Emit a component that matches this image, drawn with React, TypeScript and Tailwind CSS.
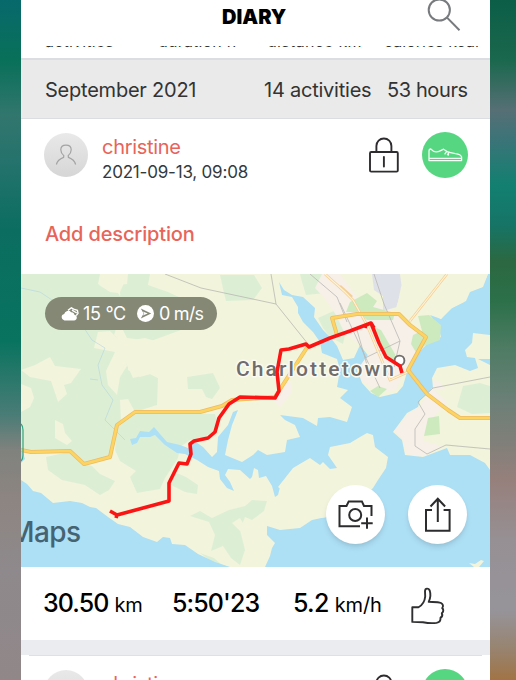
import React from "react"

type IconProps = { className?: string }

const summary = [
  { label: "activities", style: "w-[113px] tracking-[0.2px]" },
  { label: "duration h", style: "w-[109px] tracking-[0.2px]" },
  { label: "distance km", style: "w-[117px] tracking-[0.3px]" },
  { label: "calories kcal", style: "" },
]

const SearchIcon = ({ className }: IconProps) => (
  <svg className={className} viewBox="0 0 34 34" fill="none" stroke="#777b7e" strokeWidth="2">
    <circle cx="12.3" cy="12" r="10.6" />
    <path d="M19.8 19.4 32.5 32.3" />
  </svg>
)

const LockIcon = ({ className }: IconProps) => (
  <svg className={className} viewBox="0 0 30 36" fill="none" stroke="#2f2c30" strokeWidth="1.9">
    <rect x="1" y="15" width="27.8" height="19.6" rx="1.2" />
    <path d="M7.4 15V9a7.5 7.5 0 0 1 15 0v6" />
    <path d="M14.9 20v9.6" strokeLinecap="round" />
  </svg>
)

const UserAvatar = () => (
  <div className="-ml-px flex h-11 w-11 shrink-0 items-center justify-center rounded-full bg-linear-to-b from-[#e9e9e9] to-[#d6d6d6]">
    <svg className="h-[22px] w-[22px]" viewBox="0 0 22 22" fill="none" stroke="#a3a3a3" strokeWidth="1.2">
      <path d="M1.4 20.5c.8-3.5 3.3-5.6 7.2-7.1l.2-1.8C6.600 9.800 5.800 7.800 5.800 5.800 5.800 3 8 1.200 11 1.200s5.200 1.800 5.200 4.600c0 2-.8 4-3 5.800l.2 1.800c3.900 1.500 6.400 3.600 7.200 7.100" />
    </svg>
  </div>
)

const ShoeBadge = () => (
  <div className="flex h-[46px] w-[46px] shrink-0 items-center justify-center rounded-full bg-[#56d680]">
    <svg className="h-[14px] w-[35px]" viewBox="0 0 35 14" fill="none" stroke="#f0fff4" strokeWidth="1.3" strokeLinejoin="round">
      <path d="M1 12.600V3.200C1 1.800 1.800 1 2.800 1l2.400 2c2 1.200 5 .8 7-.2l3.400-1.600 4.600 3 7.200 1.400c3.400.4 5.600 1.400 6.200 3.400v3.600z" />
      <path d="M1 10.400h32.600" />
      <path d="M16.600 6.400l2.300-3.300M19.200 7.100l2.300-3.200M21 3.600l-.8 4" />
    </svg>
  </div>
)

const CloudIcon = () => (
  <svg className="h-[14px] w-[18px]" viewBox="0 0 18 14">
    <path d="M3.400 13.400a3.200 3.200 0 0 1-.2-6.300 4 4 0 0 1 7-1.900c1.800-.2 3 1 3.100 2.600 1.600.2 2.500 1.400 2.500 2.700 0 1.600-1 2.900-2.800 2.900z" fill="#fff" />
    <path d="M7 3.400l3.400-2.600 2.200 1.400 3.800 1.200.6 3-1.800 2.200M11 3.200l4.800 2.800" fill="none" stroke="#fff" strokeWidth="1.400" />
  </svg>
)

const WindIcon = () => (
  <svg className="h-[17px] w-[17px]" viewBox="0 0 17 17">
    <circle cx="8.500" cy="8.500" r="8.500" fill="#fff" />
    <path d="M3.800 3.600l10.400 4.900-10.400 4.900 2.800-4.900z" fill="#858875" />
    <path d="M5.800 6.500l5 2-5 2 1.400-2z" fill="#fff" />
  </svg>
)

const CameraIcon = ({ className }: IconProps) => (
  <svg className={className} viewBox="0 0 36 29" fill="none" stroke="#2c2c2e" strokeWidth="2">
    <path d="M22 26.200H1.500V6h7l2.200-4.600h13.200L26 6h7.500v10" />
    <circle cx="17.200" cy="15" r="6" />
    <path d="M29 17.500v11.300M23.200 23.200h11.500" />
  </svg>
)

const ShareIcon = ({ className }: IconProps) => (
  <svg className={className} viewBox="0 0 26 35" fill="none" stroke="#2c2c2e" strokeWidth="2">
    <path d="M7 13H1v20.800h23.600V13h-6" />
    <path d="M12.800 25V2M5.500 9.500l7.300-7.700 7.300 7.700" />
  </svg>
)

const ThumbIcon = ({ className }: IconProps) => (
  <svg className={className} viewBox="0 0 34 38" fill="none" stroke="#2f2f31" strokeWidth="1.900" strokeLinejoin="round">
    <path d="M1.300 20.300h6.200c4-2.300 6.300-6.300 6.700-10.800l-.2-5.500c.2-3.200 3.600-3 4.700-.5 1.300 3.800.8 7.500-1 11.300 4.500.3 9-.2 12.300 1.200 2 1.200 2.700 3.200 1.200 5 1.500 1.600 1.500 3.600-.4 5.200 1 1.800.4 3.500-1.300 4.700.2 2.500-1.200 4.600-4 5-4.500.5-9 .2-13.500-.7l-10.700-.3z" />
  </svg>
)

const RouteMap = () => (
  <svg className="h-[293px] w-full" viewBox="21 274 469 293">
    <rect x="21" y="274" width="469" height="293" fill="#f3f4dc" />

    {/* woods */}
    <g fill="#dcefd5">
      <path d="M21 274H103L99 285 110 292 118 293 122 300 150 307 125 320 117 326 114 335 122 345 125 361 133 378 150 374 158 378 157 405 135 412 118 424 110 456 85 463 70 451 21 450z" />
      <path d="M128 274H150L148 285 168 292 181 298 181 330 151 341 127 338 121 326 120 292z" />
      <path d="M46 457 73 451 83 464 92 466 100 474 115 481 109 490 100 495 85 485 62 480 48 470z" />
      <path d="M117 428 133 414 165 413 215 414 218 428 205 437 190 440 180 447 178 458 165 478 160 489 137 493 130 477 136 471 120 461 115 450z" />
      <path d="M220 275H254L262 288 253 300 226 301 224 293z" />
      <path d="M187 377 213 373 220 388 212 399 206 397 202 389 188 389z" />
      <path d="M172 471 186 477 198 485 197 494 185 492 171 485z" />
      <path d="M190 516 200 511 212 518 229 510 245 506 252 500 267 501 264 511 252 520 245 517 240 530 245 550 240 565 231 558 223 546 211 551 215 535 209 522z" />
      <path d="M300 274H325L326 293 306 295 302 282z" />
      <path d="M318 318 336 310 346 330 343 344 330 337 323 328z" />
      <path d="M200 553 214 558 224 567H219z" />
    </g>
    <g fill="#f3f4dc">
      <path d="M100 274H128L127 284 105 286 98 284z" />
      <path d="M21 370 35 365 50 357 55 366 81 369 71 383 64 385 67 394 58 402 51 381 30 377z" />
      <path d="M21 384 31 388 34 398 30 407 21 412z" />
      <path d="M98 332 110 331 122 343 127 366 120 377 117 395 108 385 106 371 115 352 94 348z" />
      <path d="M120 400 128 399 135 412 121 420z" />
      <path d="M55 420 63 424 65 433 72 441 67 445 55 438z" />
      <path d="M232 523 240 518 244 525 240 531z" />
      <path d="M128 341 145 338 165 344 181 338V377L158 378 150 374 140 377 128 370z" />
    </g>

    {/* sea */}
    <g fill="#addff5">
      <path d="M21 480 27 484 33 491 41 493 53 503 70 501 82 503 90 507 96 508 108 517 118 524 130 527 143 537 157 542 163 537 170 538 172 544 185 545 198 554 215 562 230 567H21z" />
      <path d="M21 447 25 459 21 463z" />
      <path d="M490 274H488L483 287 470 292 466 301 452 308 441 319 430 315 438 325 441 337 428 343 419 352 407 372 403 386 397 393 380 397 371 393 362 383 358 372 366 368 370 358 360 345 354 358 343 360 337 346 330 337 323 330 314 317 315 308 303 297 292 295 284 290 279 282 282 295 292 297 298 307 298 313 303 322 313 332 320 342 322 353 337 359 340 370 337 387 348 390 340 398 352 407 347 422 330 417 318 418 317 426 303 418 280 415 285 420 295 425 300 437 287 440 285 452 267 455 258 450 253 455 242 462 225 455 228 440 232 425 238 410 233 412 228 425 218 437 217 452 212 457 203 447 193 440 188 448 180 445 167 442 160 434 154 427 149 432 140 431 136 438 130 439 132 445 137 443 140 437 150 437 155 435 165 445 177 453 185 454 197 460 208 467 219 471 220 479 227 488 234 491 230 482 225 475 228 469 240 470 250 479 252 477 254 468 258 470 259 478 266 476 272 486 275 497 278 495 280 487 340 480 340 510 326 517 312 520 300 528 280 530 267 526 267 535 275 543 272 548 270 556 265 567H490z" />
    </g>
    <path d="M469 563 475 564 481 560 484 561 479 567H474z" fill="#f3f4dc" />

    {/* far shores */}
    <g fill="#f3f4dc">
      <path d="M278 487 293 468 310 458 320 465 323 462 330 469 337 468 328 455 330 447 350 443 360 437 367 433 373 435 375 447 388 457 386 468 378 480 373 488 345 515 320 518 300 505z" />
      <path d="M490 335 473 333 472 343 465 350 467 357 475 358 478 368 470 371 455 365 437 368 432 378 433 388 420 400 418 407 407 413 393 432 402 440 405 455 423 457 447 448 450 455 470 455 485 463 490 470z" />
      <path d="M478 359H490V365z" fill="#addff5" />
    </g>
    <g fill="#f6f0e9">
      <path d="M322 274H340L356 296 397 313 410 325 424 337 417 352 405 369 396 390 378 392 362 381 357 370 370 352 345 334 336 315 326 300 315 288z" />
      <path d="M432 388 447 402 427 424 423 441 442 446 425 456 406 454 403 440 394 431 408 414 420 406z" />
      <path d="M270 397 290 380 292 392 280 407z" />
      <path d="M433 380 440 382 445 389 435 390z" />
    </g>
    <path d="M372 274 H408 L401 287 397 307 383 311 383 296 374 290z" fill="#dfe1e8" />
    <path d="M400 274H488L482 287 467 292 464 302 448 310 441 319 425 309 405 315 395 311 402 289z" fill="#f3f4dc" />
    <g fill="#cdeabf">
      <path d="M350 302 367 293 377 301 373 307 395 313 393 320 367 320 358 312 346 312z" />
      <path d="M369 325 381 330 395 354 398 367 388 357z" />
      <path d="M418 316 429 315 441 325 440 340 424 346 417 354 411 344 413 335 422 331z" />
      <path d="M370 391 378 386 387 389 378 397z" />
      <path d="M428 418 439 416 440 434 424 436z" />
    </g>
    <path d="M463 386 480 383 490 386V413L472 414 457 407z" fill="#dcefd5" />

    {/* minor roads and borders */}
    <g fill="none" stroke="#b9b8b2" strokeWidth="0.800">
      <path d="M165 274 201 288 276 304 308 344" />
      <path d="M271 274 276 304M310 274 337 297 347 322" />
      <path d="M374 274 384 304 400 341 365 358M340 303 350 324 380 388M357 330 367 365M400 341 394 367" />
      <path d="M490 377 433 388 418 402 425 414 415 429 415 446 427 454 446 445 490 449" />
    </g>
    <g fill="none" stroke="#a9cfe2" strokeWidth="0.500">
      <path d="M21 288 40 292 52 300 66 307 80 322 92 340 105 348 98 365 102 385 113 400 105 420 125 440" />
      <path d="M90 379 98 380" />
    </g>
    <g fill="none" stroke="#f4cf95" strokeWidth="2.600">
      <path d="M325 274 345 292 353 300 367 325 390 380 408 372M340 286 352 297M447 274 410 321" />
    </g>
    <g fill="none" stroke="#fff3d6" strokeWidth="1.200">
      <path d="M325 274 345 292 353 300 367 325 390 380 408 372M447 274 410 321" />
    </g>

    {/* highways */}
    <g fill="none" strokeLinejoin="round">
      <g stroke="#edba64" strokeWidth="4">
        <path d="M21 450 31 452 70 451 84 464 110 457 117 425 135 412 200 412 222 406 232 400 275 397 308 346" />
        <path d="M337 335 332 318 357 314H399L410 325 426 337 408 370 427 394 448 410 460 418H490" />
      </g>
      <g stroke="#fcd462" strokeWidth="2.600">
        <path d="M21 450 31 452 70 451 84 464 110 457 117 425 135 412 200 412 222 406 232 400 275 397 308 346" />
        <path d="M337 335 332 318 357 314H399L410 325 426 337 408 370 427 394 448 410 460 418H490" />
      </g>
    </g>
    <path d="M21 424q2 2 2 6v25q0 4-2 6" fill="none" stroke="#31a37f" strokeWidth="1.200" />

    <text x="236" y="375.500" textLength="158" className="font-['Roboto','Liberation_Sans',sans-serif] text-[21px] font-medium" fill="#6f6c6b" stroke="#fbfaf2" strokeWidth="3" strokeLinejoin="round" paintOrder="stroke">
      Charlottetown
    </text>
    <circle cx="399.500" cy="360.500" r="4.900" fill="#fff" stroke="#6f6c6b" strokeWidth="1.900" />

    {/* tracked route */}
    <path
      d="M110 511 117 515 116 518M117 515 169 501 169 483 179 463 187 464 191 454 190 444 194 441 208 438 215 432 219 418 229 404 240 397 275 398 279 391 277 372 281 350 289 349 306 344 309 347 330 338 350 331 371 323 374 328M365 328 366 325M371 323 379 343 386 357 400 366 402 373"
      fill="none"
      stroke="#fa1414"
      strokeWidth="3.600"
      strokeLinejoin="round"
    />
    <text x="9" y="542" textLength="72" className="font-['Inter','Liberation_Sans',sans-serif] text-[28px] font-medium" fill="#466371">
      Maps
    </text>
  </svg>
)

const App: React.FC = () => {
  return (
    <div className="flex h-[680px] w-[516px] overflow-hidden font-['Inter','Liberation_Sans',sans-serif]">
      <div className="w-[21px] shrink-0 bg-[linear-gradient(to_bottom,#08696c_0px,#087059_60px,#32766e_115px,#25736c_160px,#0b6d60_230px,#08735f_340px,#4a7c76_415px,#80827e_450px,#8d8581_500px,#8e898c_570px,#918789_680px)]" />

      <div className="flex w-[469px] shrink-0 flex-col bg-white">
        <header className="flex h-[46px] shrink-0 items-start">
          <div className="w-[406px] pt-[4px] pl-[201px]">
            <h1 className="text-[20px] leading-[26px] font-black text-black">DIARY</h1>
          </div>
          <SearchIcon className="-mt-[2px] h-[34px] w-[34px]" />
        </header>

        <div className="flex h-[12px] shrink-0 items-start overflow-hidden pl-6">
          <div className="flex h-[4px] items-end overflow-hidden text-[16px] leading-[4px] whitespace-nowrap text-[#333]">
            {summary.map((item) => (
              <span key={item.label} className={`-mt-4 h-[11px] shrink-0 ${item.style}`}>{item.label}</span>
            ))}
          </div>
        </div>

        <div className="flex h-[61px] shrink-0 items-center border-y border-t-2 border-[#dcdde3] bg-[#eaeaea] pt-px pl-6 text-[20px] tracking-[-0.23px] text-[#333]">
          <span className="w-[219px]">September 2021</span>
          <span className="w-[123px]">14 activities</span>
          <span className="tracking-[-0.4px]">53 hours</span>
        </div>

        <section className="flex h-[155px] shrink-0 flex-col pl-6">
          <div className="flex h-[90px] items-start pt-[13px]">
            <div className="pt-[1px]"><UserAvatar /></div>
            <div className="flex w-[268px] flex-col pt-[3px] pl-[14px]">
              <span className="text-[20px] leading-6 tracking-[-0.3px] text-[#e8645a]">christine</span>
              <span className="text-[17px] leading-[26px] tracking-[-0.2px] text-[#333a3e]">2021-09-13, 09:08</span>
            </div>
            <LockIcon className="mt-[5px] ml-[13px] h-[36px] w-[30px]" />
            <div className="ml-[23px]"><ShoeBadge /></div>
          </div>
          <span className="pt-[12px] text-[20px] leading-[26px] font-medium tracking-[-0.15px] text-[#e8645a]">Add description</span>
        </section>

        <div className="relative h-[293px] shrink-0 overflow-hidden">
          <RouteMap />
          <div className="absolute top-[23px] left-6 flex h-[33px] w-[172px] items-center rounded-full bg-[#858875] pl-4 text-[18px] tracking-[-0.3px] text-white">
            <CloudIcon />
            <span className="w-[58px] pl-1 whitespace-nowrap">15 °C</span>
            <WindIcon />
            <span className="pl-[5px] tracking-[-0.8px] whitespace-nowrap">0 m/s</span>
          </div>
          <button className="absolute top-[211px] left-[305px] flex h-[59px] w-[59px] items-center justify-center rounded-full bg-white shadow-md">
            <CameraIcon className="h-[29px] w-[36px]" />
          </button>
          <button className="absolute top-[211px] left-[387px] flex h-[59px] w-[59px] items-center justify-center rounded-full bg-white shadow-md">
            <ShareIcon className="h-[35px] w-[26px]" />
          </button>
        </div>

        <div className="flex h-[73px] shrink-0 items-center pt-px pl-[22px] text-black">
          <div className="w-[129px] whitespace-nowrap">
            <span className="text-[25px] font-medium tracking-[-0.9px]">30.50</span>
            <span className="pl-[6px] text-[20px] tracking-[-0.3px]">km</span>
          </div>
          <div className="w-[121px] text-[25px] font-medium tracking-[-0.9px] whitespace-nowrap">5:50'23</div>
          <div className="w-[118px] whitespace-nowrap">
            <span className="text-[25px] font-medium tracking-[-0.7px]">5.2</span>
            <span className="pl-[6px] text-[20px] tracking-[-0.1px]">km/h</span>
          </div>
          <ThumbIcon className="mt-[3px] h-[38px] w-[34px]" />
        </div>

        <div className="h-[15px] shrink-0 bg-[#ebecf0]" />
        <div className="mx-2 h-px shrink-0 bg-[#dfe0e3]" />

        <section className="flex h-[24px] shrink-0 items-start overflow-hidden pt-[13px] pl-6">
          <div className="pt-[1px]"><UserAvatar /></div>
          <div className="w-[268px] pt-[3px] pl-[14px]">
            <span className="block text-[20px] leading-6 tracking-[-0.3px] text-[#e8645a]">christine</span>
          </div>
          <LockIcon className="mt-[5px] ml-[13px] h-[36px] w-[30px] shrink-0" />
          <div className="ml-[23px]"><ShoeBadge /></div>
        </section>
      </div>

      <div className="w-[26px] shrink-0 bg-[linear-gradient(to_bottom,#0c5e47_0px,#1a684d_60px,#566f75_110px,#3b7478_140px,#128071_185px,#167466_225px,#2c6841_262px,#2b7049_300px,#4c7b62_345px,#6b8077_400px,#7f7f79_440px,#96807c_480px,#969094_540px,#96949a_610px,#98836e_650px,#a17445_680px)]" />
    </div>
  )
}

export default App
